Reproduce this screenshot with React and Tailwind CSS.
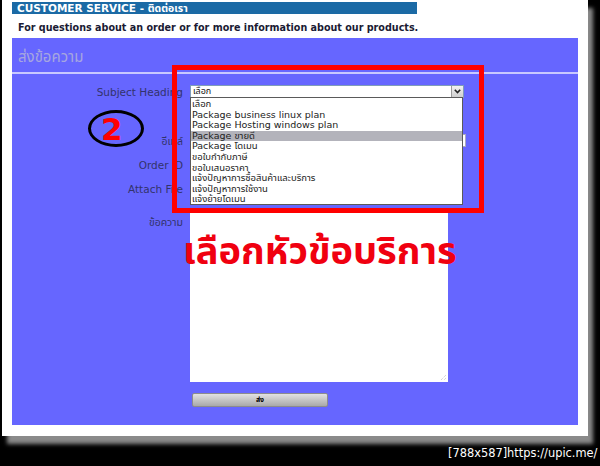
const font = { fontFamily: '"DejaVu Sans", Tahoma, "Noto Sans Thai", "Noto Sans", sans-serif' }

const items = [
  'เลือก',
  'Package business linux plan',
  'Package Hosting windows plan',
  'Package ขายดี',
  'Package โดเมน',
  'ขอใบกำกับภาษี',
  'ขอใบเสนอราคา',
  'แจ้งปัญหาการซื้อสินค้าและบริการ',
  'แจ้งปัญหาการใช้งาน',
  'แจ้งย้ายโดเมน',
]

function Label({ children, className = '' }) {
  return (
    <div className={'text-right text-[10.5px] leading-[12px] text-[#33336b] whitespace-nowrap ' + className}>
      {children}
    </div>
  )
}

export default function App() {
  return (
    <div className="relative w-[600px] h-[466px] bg-black overflow-hidden" style={font}>
      {/* page */}
      <div className="ml-[2px] w-[586px] h-[436px] bg-white pt-[2px] px-[10px] shadow-[5px_8px_4px_#8a8a8a]">
        <div className="w-[405px] h-[12px] bg-[#1b6aa5] pl-[5px] text-[10.5px] leading-[12px] font-bold text-white whitespace-nowrap">
          CUSTOMER SERVICE - ติดต่อเรา
        </div>
        <div className="mt-[8px] pl-[6px] text-[9.6px] leading-[11px] font-bold text-[#1a1a33] whitespace-nowrap">
          For questions about an order or for more information about our products.
        </div>

        <div className="relative mt-[5px] w-[566px] h-[387px] bg-[#6666ff]">
          <div className="h-[34px] pt-[4px] pl-[6px] flex items-center text-[15px] text-[#a6a6e0]">ส่งข้อความ</div>
          <div className="h-[2px] bg-[#c8c8ff]" />

          <div className="grid grid-cols-[171px_1fr] gap-x-[7px] items-center">
            <Label className="mt-[11px]">Subject Heading</Label>
            <div className="mt-[11px] w-[274px] h-[13px] bg-white border border-[#7f9db9] flex items-center">
              <span className="flex-1 pl-[2px] text-[9px] leading-[11px] text-[#111]">เลือก</span>
              <span className="w-[12px] h-[11px] bg-gradient-to-b from-[#f2f2f2] to-[#cfcfcf] border-l border-[#9a9a9a] flex items-center justify-center">
                <svg width="7" height="5" viewBox="0 0 7 5">
                  <path d="M0.8 0.8 L3.5 3.6 L6.2 0.8" stroke="#222" strokeWidth="1.6" fill="none" />
                </svg>
              </span>
            </div>

            <Label className="mt-[36px]">อีเมล์</Label>
            <div className="mt-[36px] w-[276px] h-[13px] bg-white border border-[#a8a8c0]" />

            <Label className="mt-[12px]">Order ID</Label>
            <div className="mt-[12px] w-[200px] h-[12px] bg-white border border-[#a8a8c0]" />

            <Label className="mt-[12px]">Attach File</Label>
            <div className="mt-[12px] w-[200px] h-[12px] bg-white border border-[#a8a8c0]" />

            <Label className="self-start mt-[21px]">ข้อความ</Label>
            <div className="mt-[17px] w-[258px] h-[170px] bg-white relative">
              <svg className="absolute right-[1px] bottom-[1px]" width="8" height="8" viewBox="0 0 8 8">
                <path d="M7 2 L2 7 M7 5 L5 7" stroke="#c4c4c4" strokeWidth="1" strokeDasharray="1 1" />
              </svg>
            </div>

            <div />
            <div className="mt-[11px] ml-[2px] w-[136px] h-[14px] rounded-[2px] border border-[#8c8c8c] bg-gradient-to-b from-[#e2e2e2] to-[#a9a9a9] flex items-center justify-center text-[7px] font-bold text-black">
              ส่ง
            </div>
          </div>

          {/* open dropdown list */}
          <div className="absolute left-[178px] top-[59px] w-[273px] h-[108px] bg-white border border-[#5a5a5a] pt-[1px]">
            {items.map((t, i) => (
              <div
                key={i}
                className={
                  'h-[10.6px] leading-[10.6px] pl-[1px] text-[9.5px] text-[#222] whitespace-nowrap ' +
                  (i === 3 ? 'bg-[#b3b3bb]' : '')
                }
              >
                {t}
              </div>
            ))}
          </div>
        </div>
      </div>

      <div className="pl-[448px] mt-[10px] text-[11.4px] leading-[14px] text-white whitespace-nowrap">
        [788x587]https://upic.me/
      </div>

      {/* annotations */}
      <div className="absolute left-[172px] top-[65px] w-[312px] h-[148px] border-[5px] border-[#ff0000]" />
      <div className="absolute left-[88px] top-[110px] w-[56px] h-[37px] rounded-[50%] border-[3px] border-black" />
      <div className="absolute left-[101px] top-[114px] text-[31px] leading-[31px] font-bold text-[#ff0000]">2</div>
      <div className="absolute left-[183px] top-[227px] text-[38px] leading-[48px] font-bold text-[#f00010] whitespace-nowrap">
        เลือกหัวข้อบริการ
      </div>
    </div>
  )
}
